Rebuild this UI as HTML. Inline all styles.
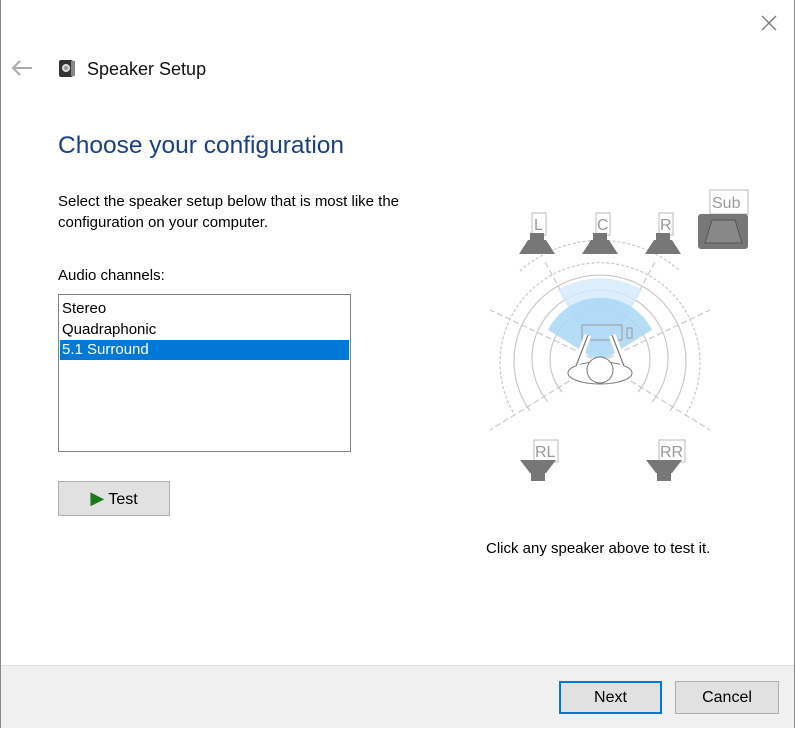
<!DOCTYPE html>
<html><head><style>
body{margin:0;width:795px;height:729px;background:#fff;font-family:"Liberation Sans",sans-serif;position:relative;overflow:hidden}
.win{position:absolute;left:0;top:0;width:793px;height:727px;border:1px solid #888;border-top:none}
.t{position:absolute;white-space:nowrap;color:#000}
.foot{position:absolute;left:1px;right:1px;top:665px;bottom:1px;background:#f0f0f0;border-top:1px solid #dfdfdf}
.btn{position:absolute;background:#e1e1e1;border:1px solid #adadad;font-size:16px;text-align:center;box-sizing:border-box}
</style></head><body>
<div class="win"></div>
<svg style="position:absolute;left:760px;top:14px" width="18" height="18"><path d="M2 2L16 16M16 2L2 16" stroke="#777" stroke-width="1.3"/></svg>
<svg style="position:absolute;left:11px;top:60px" width="22" height="16"><path d="M2 8H21M9 1L2 8L9 15" stroke="#aaa" stroke-width="2" fill="none"/></svg>
<svg style="position:absolute;left:57px;top:57px" width="20" height="22"><rect x="2" y="3" width="14" height="17" rx="2" fill="#333"/><rect x="14" y="4" width="4" height="15" fill="#888"/><circle cx="9" cy="11" r="4" fill="#ddd"/><circle cx="9" cy="11" r="2" fill="#999"/></svg>
<div class="t" style="left:87px;top:59px;font-size:18px;color:#111">Speaker Setup</div>
<div class="t" style="left:58px;top:132px;font-size:24.5px;color:#1a3f8a">Choose your configuration</div>
<div class="t" style="left:58px;top:191px;font-size:15px;line-height:21px">Select the speaker setup below that is most like the<br>configuration on your computer.</div>
<div class="t" style="left:58px;top:267px;font-size:15px">Audio channels:</div>
<div style="position:absolute;left:58px;top:294px;width:291px;height:156px;border:1px solid #828282;font-size:15px">
<div style="padding:3px 3px 0 3px;line-height:21px">Stereo<br>Quadraphonic</div>
<div style="margin:0 1px;background:#0078d7;color:#fff;padding-left:2px;line-height:20px">5.1 Surround</div>
</div>
<div class="btn" style="left:58px;top:481px;width:112px;height:35px;line-height:33px"><span style="color:#1a7a1a;font-size:18px">&#9654;</span> Test</div>
<svg style="position:absolute;left:480px;top:180px" width="290" height="310">
<g fill="none" stroke="#c8c8c8" stroke-width="1.2">
<path d="M33 232 A100 100 0 1 1 207 232" stroke-dasharray="3 2"/>
<path d="M50 231 A86 86 0 1 1 190 231"/>
<path d="M68 222 A68 68 0 1 1 172 222"/>
<path d="M82 212 A50 50 0 1 1 158 212"/>
<path d="M40 91 A120 120 0 0 1 200 91" stroke-dasharray="3 2"/>
<path d="M120 182 L65 82 M120 182 L175 82 M120 182 L10 130 M120 182 L230 130 M120 182 L10 250 M120 182 L230 250" stroke-dasharray="6 3"/>
</g>
<path d="M120 182 L78 110 A82 82 0 0 1 162 110 Z" fill="#d4ebfa" opacity=".85"/>
<path d="M120 182 L68 150 A58 58 0 0 1 172 150 Z" fill="#a9d7f5" opacity=".85"/>
<rect x="102" y="145" width="40" height="15" fill="none" stroke="#999"/>
<rect x="147" y="148" width="5" height="10" fill="none" stroke="#999"/>
<ellipse cx="120" cy="193" rx="32" ry="11" fill="#fff" stroke="#777"/>
<circle cx="120" cy="190" r="13" fill="#fff" stroke="#777"/>
<path d="M96 186 L108 155 M144 186 L132 155" stroke="#fff" stroke-width="7"/>
<path d="M96 186 L108 155 M144 186 L132 155" stroke="#777" stroke-width="1.2"/>
<g font-size="16" fill="#999" font-family="Liberation Sans">
<rect x="52" y="33" width="14" height="22" fill="#fff" stroke="#bbb"/><text x="54" y="50">L</text>
<rect x="116" y="33" width="14" height="22" fill="#fff" stroke="#bbb"/><text x="117" y="50">C</text>
<rect x="179" y="33" width="14" height="22" fill="#fff" stroke="#bbb"/><text x="180" y="50">R</text>
<rect x="230" y="10" width="38" height="24" fill="#fff" stroke="#bbb"/><text x="232" y="28">Sub</text>
<rect x="54" y="260" width="24" height="22" fill="#fff" stroke="#bbb"/><text x="55" y="277">RL</text>
<rect x="179" y="260" width="26" height="22" fill="#fff" stroke="#bbb"/><text x="180" y="277">RR</text>
</g>
<g fill="#777">
<rect x="50" y="53" width="14" height="7"/><path d="M48 60H66L75 74H39Z"/>
<rect x="113" y="53" width="14" height="7"/><path d="M111 60H129L138 74H102Z"/>
<rect x="176" y="53" width="14" height="7"/><path d="M174 60H192L201 74H165Z"/>
<rect x="218" y="34" width="50" height="35" rx="3"/><path d="M232 40H255L262 63H225Z" fill="#888" stroke="#555"/>
<path d="M40 280H76L66 293H50Z"/><rect x="51" y="293" width="14" height="8"/>
<path d="M166 280H202L192 293H176Z"/><rect x="177" y="293" width="14" height="8"/>
</g>
</svg>
<div class="t" style="left:486px;top:540px;font-size:15px">Click any speaker above to test it.</div>
<div class="foot"></div>
<div class="btn" style="left:559px;top:681px;width:103px;height:33px;border:2px solid #0078d7;line-height:29px">Next</div>
<div class="btn" style="left:675px;top:681px;width:104px;height:33px;line-height:31px">Cancel</div>
</body></html>
